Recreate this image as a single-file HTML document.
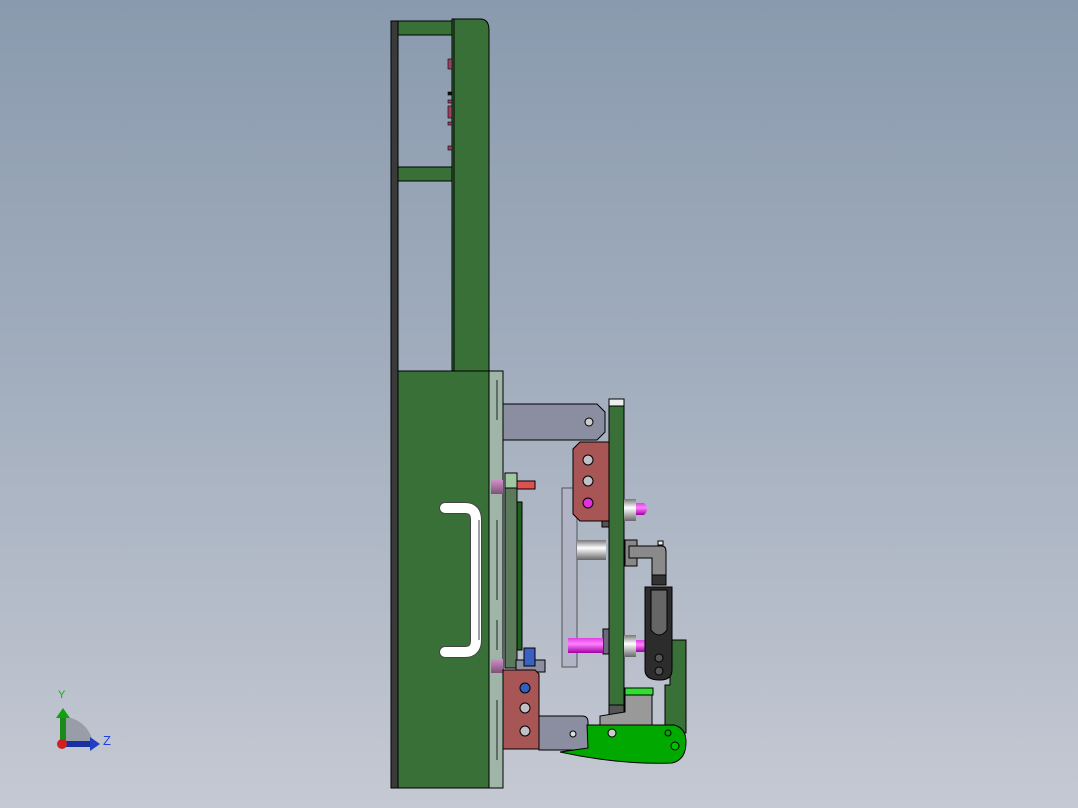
<!DOCTYPE html>
<html><head><style>
html,body{margin:0;padding:0;width:1078px;height:808px;overflow:hidden}
body{background:linear-gradient(#8a9aae 0%,#a1adbd 45%,#c5c9d3 100%);font-family:"Liberation Sans",sans-serif}
svg{position:absolute;left:0;top:0}
</style></head><body>
<svg width="1078" height="808" viewBox="0 0 1078 808">
<defs>
<linearGradient id="pipe" x1="0" x2="1"><stop offset="0" stop-color="#fff"/><stop offset=".6" stop-color="#f4f4f6"/><stop offset="1" stop-color="#9a98a8"/></linearGradient>
<linearGradient id="pipeh" y1="0" y2="1" x1="0" x2="0"><stop offset="0" stop-color="#fff"/><stop offset=".6" stop-color="#f0f0f2"/><stop offset="1" stop-color="#a09eaa"/></linearGradient>
<linearGradient id="cyl" y1="0" y2="1" x1="0" x2="0"><stop offset="0" stop-color="#777"/><stop offset=".4" stop-color="#fff"/><stop offset="1" stop-color="#666"/></linearGradient>
<linearGradient id="mag" y1="0" y2="1" x1="0" x2="0"><stop offset="0" stop-color="#e040e0"/><stop offset=".4" stop-color="#ff80ff"/><stop offset="1" stop-color="#a000a0"/></linearGradient>
<linearGradient id="pink" y1="0" y2="1" x1="0" x2="0"><stop offset="0" stop-color="#d090c8"/><stop offset="1" stop-color="#805078"/></linearGradient>
</defs>
<g stroke="#000" stroke-width="1">
<!-- top frame -->
<rect x="391" y="21" width="7" height="767" fill="#3a3a3a"/>
<rect x="398" y="21" width="54" height="14" fill="#387038"/>
<rect x="398" y="167" width="54" height="14" fill="#387038"/>
<path d="M452 19 H480 Q489 19 489 30 V371 H452 Z" fill="#387038"/>
<line x1="454" y1="19" x2="454" y2="371"/>
<g fill="#a04060" stroke-width=".6"><rect x="448" y="59" width="4" height="10"/><rect x="448" y="92" width="4" height="3" fill="#111"/><rect x="448" y="100" width="4" height="3"/><rect x="448" y="106" width="4" height="12"/><rect x="448" y="122" width="4" height="3"/><rect x="448" y="146" width="4" height="4"/></g>
<!-- lower block -->
<rect x="398" y="371" width="91" height="417" fill="#387038"/>
<rect x="489" y="371" width="14" height="417" fill="#9fb5a8"/>
<g stroke-width=".8"><line x1="497" y1="380" x2="497" y2="420"/><line x1="497" y1="520" x2="497" y2="600"/><line x1="497" y1="620" x2="497" y2="650"/><line x1="497" y1="700" x2="497" y2="760"/></g>
<!-- handle -->
<path d="M445 508 H465 Q476 508 476 520 V640 Q476 652 465 652 H445" fill="none" stroke="#444" stroke-width="12" stroke-linecap="round"/>
<path d="M445 508 H465 Q476 508 476 520 V640 Q476 652 465 652 H445" fill="none" stroke="#fff" stroke-width="10" stroke-linecap="round"/>
<line x1="479" y1="520" x2="479" y2="640" stroke="#a09eaa" stroke-width="2"/>
<!-- upper gray arm -->
<path d="M503 404 H597 L605 412 V432 L597 440 H503 Z" fill="#8a8ea0"/>
<circle cx="589" cy="422" r="4" fill="#ccc"/>
<!-- green left plate & pcb -->
<rect x="505" y="473" width="12" height="195" fill="#5a7a5a"/>
<rect x="505" y="473" width="12" height="15" fill="#a0c8a0"/>
<rect x="517" y="502" width="5" height="148" fill="#206020"/>
<rect x="517" y="481" width="18" height="8" fill="#e05050"/>
<rect x="491" y="480" width="12" height="14" fill="url(#pink)" stroke="none"/>
<rect x="491" y="659" width="12" height="14" fill="url(#pink)" stroke="none"/>
<!-- light outline plate -->
<rect x="562" y="488" width="15" height="179" fill="#b0b4c4" stroke="#555"/>
<rect x="577" y="540" width="29" height="20" fill="url(#cyl)" stroke="none"/>
<!-- upper red block -->
<path d="M580 442 H609 V521 H580 L573 514 V449 Z" fill="#a85555"/>
<circle cx="588" cy="460" r="5" fill="#c0c0c8"/><circle cx="588" cy="481" r="5" fill="#c0c0c8"/><circle cx="588" cy="503" r="5" fill="#e030e0"/>
<rect x="602" y="521" width="8" height="6" fill="#555"/>
<!-- green vertical plate -->
<rect x="609" y="399" width="15" height="316" fill="#387038"/>
<rect x="609" y="399" width="15" height="7" fill="#eee"/>
<rect x="609" y="705" width="15" height="10" fill="#555"/>
<!-- pins -->
<rect x="624" y="499" width="12" height="22" fill="url(#cyl)" stroke="none"/>
<path d="M636 503 H644 Q650 509 644 515 H636 Z" fill="url(#mag)" stroke="none"/>
<rect x="603" y="629" width="6" height="25" fill="#6a6a7a"/>
<rect x="568" y="638" width="35" height="15" fill="url(#mag)" stroke="none"/>
<rect x="624" y="635" width="12" height="22" fill="url(#cyl)" stroke="none"/>
<path d="M636 640 H644 Q650 646 644 652 H636 Z" fill="url(#mag)" stroke="none"/>
<!-- link -->
<rect x="625" y="540" width="12" height="26" fill="#888"/>
<path d="M629 546 H662 Q666 546 666 552 V585 H652 V558 H629 Z" fill="#8a8a8a"/>
<rect x="652" y="575" width="14" height="10" fill="#333"/>
<rect x="658" y="541" width="5" height="4" fill="#eee"/>
<path d="M665 640 H686 V733 H665 V685 H670 V650 Z" fill="#387038"/>
<path d="M645 587 H672 V670 Q672 680 660 680 Q645 680 645 670 Z" fill="#2c2c2c"/>
<path d="M651 590 H667 V630 Q659 640 651 630 Z" fill="#666"/>
<circle cx="659" cy="658" r="4" fill="#555"/><circle cx="659" cy="671" r="4" fill="#555"/>
<!-- wedge -->
<path d="M625 688 H652 V725 H600 V716 L625 712 Z" fill="#999"/>
<rect x="625" y="688" width="28" height="7" fill="#30e030"/>
<!-- lower gray & red -->
<rect x="516" y="660" width="29" height="12" fill="#8a8ea0"/>
<rect x="524" y="648" width="11" height="18" fill="#3a60c0"/>
<path d="M539 716 H582 Q588 716 588 722 V750 H539 Z" fill="#8a8ea0"/>
<circle cx="573" cy="734" r="3" fill="#ddd"/>
<path d="M503 670 H535 L539 674 V749 H503 Z" fill="#a85555"/>
<circle cx="525" cy="688" r="5" fill="#3060c0"/><circle cx="525" cy="708" r="5" fill="#c0c0c8"/><circle cx="525" cy="731" r="5" fill="#c0c0c8"/>
<!-- green arm -->
<path d="M587 725 H674 Q686 728 686 742 Q686 760 672 763 Q620 765 560 752 L588 748 Z" fill="#00a800"/>
<circle cx="612" cy="733" r="4" fill="#ccc"/><circle cx="668" cy="733" r="3" fill="#00a800"/><circle cx="675" cy="746" r="4" fill="#00c000"/>
</g>
<!-- triad -->
<path d="M63 745 V717 A30 30 0 0 1 93 745 Z" fill="#8f939c" opacity=".8"/>
<rect x="60" y="716" width="6" height="28" fill="#1a8a1a"/>
<path d="M56 718 L63 708 L70 718 Z" fill="#10a010"/>
<rect x="63" y="741" width="28" height="6" fill="#1830a0"/>
<path d="M90 737 L100 744 L90 751 Z" fill="#2040c0"/>
<circle cx="62" cy="744" r="5" fill="#d02020"/>
<text x="58" y="698" font-size="11" fill="#10b010">Y</text>
<text x="103" y="745" font-size="13" fill="#2040e0">Z</text>
</svg>
</body></html>
